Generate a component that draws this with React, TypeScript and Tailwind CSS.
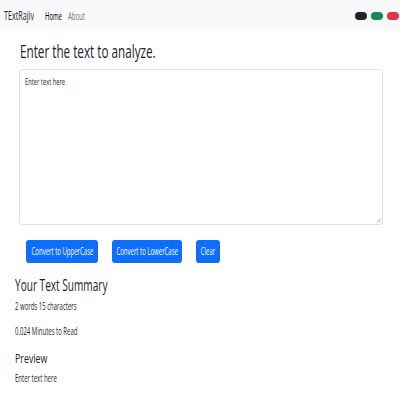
import React from "react";

const sq = "inline-block origin-left scale-x-[0.6] whitespace-nowrap";

const Btn = ({ label, w }: { label: string; w: string }) => (
  <button
    className={`${w} h-[23px] rounded-[3px] bg-[#0d6efd] text-white text-[10px] leading-[23px] flex items-center justify-center overflow-hidden`}
  >
    <span className="inline-block origin-center scale-x-[0.6] whitespace-nowrap">
      {label}
    </span>
  </button>
);

export default function App() {
  return (
    <div className="w-[400px] h-[400px] bg-white text-[#212529] font-['Open_Sans',sans-serif] overflow-hidden">
      {/* navbar */}
      <nav className="h-[31px] bg-[#f8f9fa] flex items-center pl-[4px] pr-[1px]">
        <div className="w-[41px] text-[12px] leading-[16px]">
          <span className={sq}>TExtRajiv</span>
        </div>
        <div className="w-[23px] text-[10px] leading-[14px] text-black">
          <span className={sq}>Home</span>
        </div>
        <div className="text-[10px] leading-[14px] text-[#6c757d]">
          <span className={sq}>About</span>
        </div>
        <div className="ml-auto flex gap-[4px] items-center">
          <div className="w-[12px] h-[8px] rounded-full bg-[#212529]" />
          <div className="w-[12px] h-[8px] rounded-full bg-[#198754]" />
          <div className="w-[12px] h-[8px] rounded-full bg-[#dc3545]" />
        </div>
      </nav>

      <div className="pl-[19px] w-[383px]">
        <h1 className="mt-[9px] pl-[1px] text-[18px] leading-[22px] font-medium">
          <span className="inline-block origin-left scale-x-[0.65] whitespace-nowrap">
            Enter the text to analyze.
          </span>
        </h1>
        <div className="relative mt-[7px] h-[156px] border border-[#dee2e6] rounded-[3px] pl-[5px] pt-[6px] text-[9px] leading-[12px]">
          <span className="inline-block origin-left scale-x-[0.64] whitespace-nowrap">
            Enter text here
          </span>
          <svg
            className="absolute right-[1px] bottom-[1px]"
            width="5"
            height="5"
            viewBox="0 0 5 5"
          >
            <path d="M4.5 1 L1 4.5 M4.5 3 L3 4.5" stroke="#9ca3af" strokeWidth="0.8" />
          </svg>
        </div>
        <div className="mt-[15px] ml-[7px] flex gap-[14px]">
          <Btn label="Convert to UpperCase" w="w-[72px]" />
          <Btn label="Convert to LowerCase" w="w-[70px]" />
          <Btn label="Clear" w="w-[24px]" />
        </div>
      </div>

      <div className="pl-[15px]">
        <h2 className="mt-[12px] text-[16px] leading-[20px] font-medium">
          <span className="inline-block origin-left scale-x-[0.63] whitespace-nowrap">
            Your Text Summary
          </span>
        </h2>
        <p className="mt-[4px] text-[10px] leading-[14px]">
          <span className={sq}>2 words 15 characters</span>
        </p>
        <p className="mt-[11px] text-[10px] leading-[14px]">
          <span className={sq}>0.024 Minutes to Read</span>
        </p>
        <h2 className="mt-[12px] text-[13px] leading-[16px] font-medium">
          <span className="inline-block origin-left scale-x-[0.68] whitespace-nowrap">
            Preview
          </span>
        </h2>
        <p className="mt-[5px] text-[10px] leading-[14px]">
          <span className={sq}>Enter text here</span>
        </p>
      </div>
    </div>
  );
}
